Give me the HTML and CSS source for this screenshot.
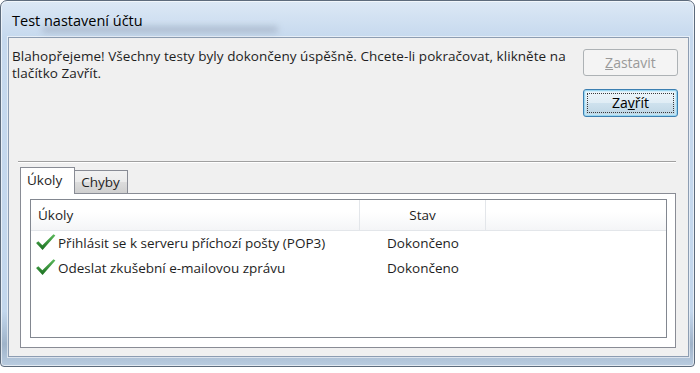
FILE: index.html
```html
<!DOCTYPE html>
<html lang="cs">
<head>
  <meta charset="UTF-8" />
  <title>Test nastavení účtu</title>
  <link rel="stylesheet" href="styles.css">
</head>
<body>
  <div class="window">
    <div class="titlebar">
      <span class="title">Test nastavení účtu</span>
      <div class="ghost"></div>
    </div>

    <div class="client">
      <div class="top">
        <p class="message">Blahopřejeme! Všechny testy byly dokončeny úspěšně. Chcete-li pokračovat, klikněte na<br>tlačítko Zavřít.</p>
        <div class="buttons">
          <button class="btn" disabled><u>Z</u>astavit</button>
          <button class="btn default"><span class="focus">Za<u>v</u>řít</span></button>
        </div>
      </div>

      <div class="separator"></div>

      <div class="tabs">
        <div class="tab active">Úkoly</div>
        <div class="tab">Chyby</div>
      </div>

      <div class="panel">
        <div class="listview">
          <div class="lv-header">
            <div class="lv-col first">Úkoly</div>
            <div class="lv-col center">Stav</div>
            <div class="lv-col last"></div>
          </div>
          <div class="lv-row">
            <div class="lv-cell task">
              <svg class="check" viewBox="0 0 20 17" width="21" height="18">
                <defs>
                  <linearGradient id="g1" x1="0" y1="0" x2="0" y2="1">
                    <stop offset="0" stop-color="#5cba5c" />
                    <stop offset="1" stop-color="#1a6f20" />
                  </linearGradient>
                </defs>
                <path d="M1 9.5 L3.2 7.8 L7 11.6 L17.6 1 L19.4 2.2 L7.2 16 Z" fill="url(#g1)" />
              </svg>
              Přihlásit se k serveru příchozí pošty (POP3)
            </div>
            <div class="lv-cell center">Dokončeno</div>
            <div class="lv-cell"></div>
          </div>
          <div class="lv-row">
            <div class="lv-cell task">
              <svg class="check" viewBox="0 0 20 17" width="21" height="18">
                <path d="M1 9.5 L3.2 7.8 L7 11.6 L17.6 1 L19.4 2.2 L7.2 16 Z" fill="url(#g1)" />
              </svg>
              Odeslat zkušební e-mailovou zprávu
            </div>
            <div class="lv-cell center">Dokončeno</div>
            <div class="lv-cell"></div>
          </div>
        </div>
      </div>
    </div>
  </div>
</body>
</html>
```

FILE: styles.css
```css
body {
  margin: 0;
  background: #fff;
  font-family: 'Open Sans', 'DejaVu Sans', sans-serif;
  font-size: 13.5px;
  color: #1e1e1e;
}
.window {
  width: 695px;
  height: 367px;
  box-sizing: border-box;
  border: 1px solid #5d6b7c;
  border-radius: 7px 7px 4px 4px;
  padding: 0 5px 9px 7px;
  display: flex;
  flex-direction: column;
  background: linear-gradient(to bottom, #dce8f5 0%, #c6d9ee 10%, #c3d7ed 85%, #9fb3c9 94%, #b9cce0 100%);
  box-shadow: inset 0 0 0 1px rgba(255, 255, 255, 0.6);
}
.titlebar {
  height: 36px;
  display: flex;
  align-items: center;
  position: relative;
}
.title {
  font-size: 14.5px;
  color: #000;
  margin-left: 4px;
  margin-top: 2px;
  white-space: nowrap;
  position: relative;
  z-index: 1;
}
/* blurred window behind the glass */
.ghost {
  position: absolute;
  left: 34px;
  top: 25px;
  width: 236px;
  height: 7px;
  border-radius: 4px;
  background: rgba(110, 120, 140, 0.3);
  filter: blur(3px);
}
.client {
  flex: 1;
  display: flex;
  flex-direction: column;
  background: #f0f0f0;
  border: 1px solid #8d9db2;
  box-shadow: 0 0 0 1px rgba(255, 255, 255, 0.55);
}
.top {
  height: 123px;
  box-sizing: border-box;
  display: flex;
  justify-content: space-between;
  padding: 0 10px 0 3px;
}
.message {
  margin: 10px 0 0 0;
  line-height: 17px;
  white-space: nowrap;
  letter-spacing: 0.05px;
}
.buttons {
  margin-top: 11px;
  display: flex;
  flex-direction: column;
  gap: 13px;
}
.btn {
  width: 95px;
  height: 27px;
  box-sizing: border-box;
  border: 1px solid #707070;
  border-radius: 3px;
  font-family: inherit;
  font-size: 14px;
  color: #000;
  padding: 0;
  background: linear-gradient(to bottom, #f2f2f2 0%, #ebebeb 49%, #dddddd 50%, #cfcfcf 100%);
}
.btn:disabled {
  border-color: #adb2b5;
  background: #f4f4f4;
  color: #9a9a9a;
}
.btn.default {
  height: 28px;
  border-color: #3c7fb1;
  background: linear-gradient(to bottom, #eef6fb 0%, #e0edf5 49%, #cfe2ee 50%, #bdd5e4 100%);
  box-shadow: inset 0 0 0 1px #9ad6f0, inset 0 0 0 2px rgba(200, 235, 250, 0.7);
  padding: 3px;
}
.focus {
  display: block;
  height: 100%;
  box-sizing: border-box;
  border: 1px dotted #3a3a3a;
  line-height: 18px;
}
.separator {
  margin: 0 12px 0 9px;
  border-top: 1px solid #a0a0a0;
  border-bottom: 1px solid #fff;
}
.tabs {
  display: flex;
  align-items: flex-end;
  margin: 4px 0 0 11px;
  height: 26px;
}
.tab {
  height: 23px;
  box-sizing: border-box;
  border: 1px solid #898c95;
  border-bottom: none;
  padding: 0 7px 0 6px;
  line-height: 23px;
  background: linear-gradient(to bottom, #f2f2f2 0%, #ebebeb 49%, #dddddd 50%, #cfcfcf 100%);
  margin-left: -1px;
}
.tab.active {
  height: 27px;
  margin: 0 0 -1px 0;
  padding: 0 12px 0 6px;
  line-height: 25px;
  background: #fff;
  position: relative;
  z-index: 1;
}
.panel {
  flex: 1;
  margin: 0 12px 8px 11px;
  border: 1px solid #898c95;
  background: #fff;
  padding: 5px 8px 9px 9px;
  display: flex;
}
.listview {
  flex: 1;
  border: 1px solid #828790;
  background: #fff;
}
.lv-header, .lv-row {
  display: grid;
  grid-template-columns: 329px 126px 1fr;
}
.lv-header {
  height: 31px;
  box-sizing: border-box;
  background: linear-gradient(to bottom, #fff 0%, #fff 40%, #f4f5f7 100%);
  border-bottom: 1px solid #e3e6ea;
}
.lv-col {
  line-height: 30px;
  border-right: 1px solid #e3e6ea;
}
.lv-col.first {
  padding-left: 7px;
}
.lv-col.last {
  border-right: none;
}
.center {
  text-align: center;
}
.lv-row {
  height: 25px;
  line-height: 25px;
}
.lv-cell.task {
  display: flex;
  align-items: center;
  padding-left: 4px;
  gap: 2px;
}
.check {
  flex: none;
  margin-top: -3px;
}
```
